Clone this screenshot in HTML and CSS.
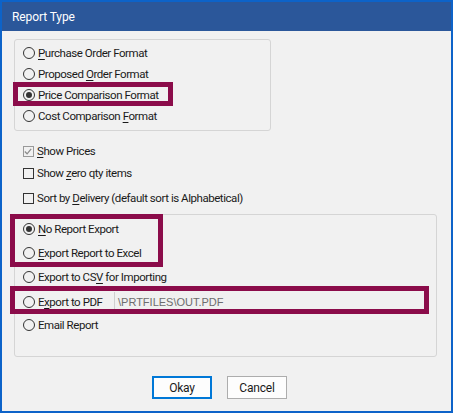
FILE: index.html
```html
<!DOCTYPE html>
<html>
<head>
<meta charset="utf-8">
<link rel="stylesheet" href="styles.css">
</head>
<body>
<div class="window">
  <div class="titlebar">Report Type</div>
  <div class="content">
    <div class="group group-format">
      <div class="row"><span class="radio"></span><span class="label"><u>P</u>urchase Order Format</span></div>
      <div class="row"><span class="radio"></span><span class="label">Proposed <u>O</u>rder Format</span></div>
      <div class="row"><span class="radio on"></span><span class="label">Price <u>C</u>omparison Format</span></div>
      <div class="row"><span class="radio"></span><span class="label">Cost Comparison <u>F</u>ormat</span></div>
    </div>
    <div class="checks">
      <div class="row row-c1"><span class="check checked"><svg viewBox="0 0 11 11" width="11" height="11"><path d="M2 5.5 L4.5 8 L9 2.5" fill="none" stroke="#8a8a8a" stroke-width="1.3"/></svg></span><span class="label"><u>S</u>how Prices</span></div>
      <div class="row row-c2"><span class="check"></span><span class="label">Show <u>z</u>ero qty items</span></div>
      <div class="row row-c3"><span class="check"></span><span class="label">Sort by <u>D</u>elivery (default sort is Alphabetical)</span></div>
    </div>
    <div class="group group-export">
      <div class="row row-e1"><span class="radio on"></span><span class="label"><u>N</u>o Report Export</span></div>
      <div class="row row-e2"><span class="radio"></span><span class="label"><u>E</u>xport Report to Excel</span></div>
      <div class="row row-e3"><span class="radio"></span><span class="label">Export to CS<u>V</u> for Importing</span></div>
      <div class="row row-e4"><span class="radio"></span><span class="label label-pdf">E<u>x</u>port to PDF</span><span class="field">\PRTFILES\OUT.PDF</span></div>
      <div class="row row-e5"><span class="radio"></span><span class="label">Email Report</span></div>
    </div>
    <div class="buttons">
      <button class="btn btn-default">Okay</button>
      <button class="btn">Cancel</button>
    </div>
  </div>
  <div class="mark mark-1"></div>
  <div class="mark mark-2"></div>
  <div class="mark mark-3"></div>
</div>
</body>
</html>
```
FILE: styles.css
```css
* { box-sizing: border-box; }
html, body { margin: 0; padding: 0; }
body {
  width: 453px;
  height: 413px;
  overflow: hidden;
  font-family: Roboto, "Liberation Sans", Arial, sans-serif;
  font-size: 11.5px;
  letter-spacing: -0.45px;
  color: #1a1a1a;
}
.window {
  position: relative;
  width: 453px;
  height: 413px;
  border: 2px solid #0d63c9;
  background: #f0f0f0;
  display: flex;
  flex-direction: column;
}
.titlebar {
  height: 29px;
  background: #2b579a;
  color: #ffffff;
  padding-left: 10px;
  display: flex;
  align-items: center;
  font-size: 12px;
  letter-spacing: -0.1px;
  padding-top: 1px;
}
.content {
  flex: 1;
  display: flex;
  flex-direction: column;
  padding: 8px 15px 0 12px;
  background: #f1f1f1;
}
.group {
  border: 1px solid #d5d5d5;
  border-radius: 3px;
}
.group-format {
  width: 257px;
  height: 92px;
  padding: 2px 0 0 8px;
}
.row {
  display: flex;
  align-items: center;
  height: 21px;
}
.radio {
  width: 12px;
  height: 12px;
  border: 1px solid #333333;
  border-radius: 50%;
  background: #ffffff00;
  margin-right: 3px;
  display: flex;
  align-items: center;
  justify-content: center;
  flex: none;
}
.radio.on::after {
  content: "";
  width: 6px;
  height: 6px;
  border-radius: 50%;
  background: #333333;
}
.label u { text-decoration-thickness: 1px; text-underline-offset: 2px; }
.checks {
  padding-left: 9px;
  display: flex;
  flex-direction: column;
}
.checks .row { height: 20px; }
.row-c1 { margin-top: 10px; }
.row-c2 { margin-top: 2px; }
.row-c3 { margin-top: 5px; }
.check {
  width: 11px;
  height: 11px;
  border: 1px solid #333333;
  margin-right: 3px;
  flex: none;
  display: flex;
}
.check.checked { border-color: #999999; }
.check svg { margin: -1px 0 0 -1px; }
.group-export {
  margin-top: 6px;
  width: 423px;
  height: 143px;
  padding: 4px 0 0 8px;
}
.group-export .row { height: 20px; }
.row-e2 { margin-top: 4px; }
.row-e3 { margin-top: 4px; }
.row-e4 { margin-top: 5px; }
.row-e5 { margin-top: 3px; }
.label-pdf { width: 76px; flex: none; }
.field {
  width: 311px;
  height: 20px;
  border-left: 1px solid #cfcfcf;
  background: #f0f0f0;
  color: #6d6d6d;
  padding-left: 3px;
  display: flex;
  align-items: center;
  font-family: "Liberation Sans", Arial, sans-serif;
  font-size: 11px;
  letter-spacing: 0;
}
.buttons {
  display: flex;
  gap: 15px;
  margin-top: 19px;
  padding-left: 138px;
}
.btn {
  width: 60px;
  height: 23px;
  background: #fdfdfd;
  border: 1px solid #adadad;
  font-family: Roboto, "Liberation Sans", Arial, sans-serif;
  font-size: 12px;
  letter-spacing: -0.2px;
  color: #1a1a1a;
  padding: 0;
}
.btn-default { border: 2px solid #0078d7; }
.mark {
  position: absolute;
  border: 5px solid #8b0c4a;
}
.mark-1 { left: 11px; top: 80px; width: 160px; height: 24px; }
.mark-2 { left: 8px; top: 212px; width: 153px; height: 53px; }
.mark-3 { left: 8px; top: 284px; width: 419px; height: 28px; }
```
